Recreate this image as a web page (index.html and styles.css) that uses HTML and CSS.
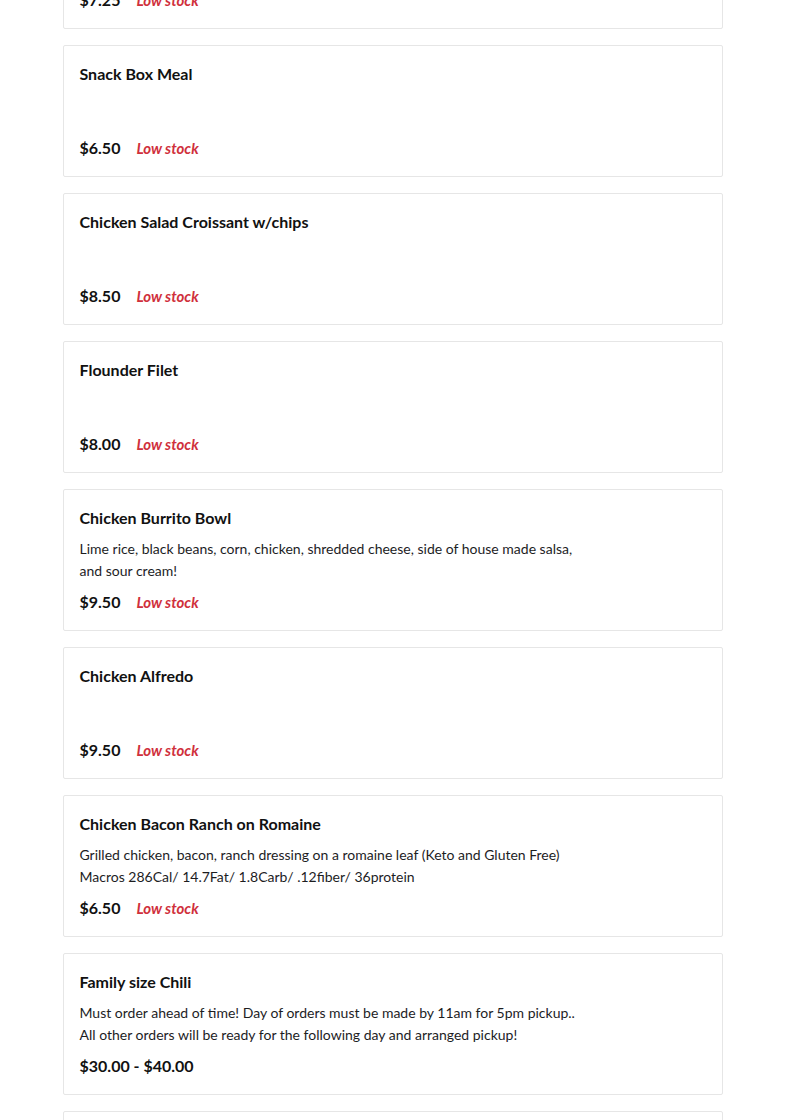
FILE: index.html
```html
<!DOCTYPE html>
<html lang="en">
<head>
    <meta charset="UTF-8">
    <meta name="viewport" content="width=device-width, initial-scale=1.0">
    <title>Menu</title>
    <link rel="stylesheet" href="styles.css">
</head>
<body>
    <div class="menu">
        <div class="item">
            <div class="info">
                <h3>Chicken Quesadilla</h3>
            </div>
            <div class="price-row"><span class="price">$7.25</span><span class="stock">Low stock</span></div>
        </div>

        <div class="item">
            <div class="info">
                <h3>Snack Box Meal</h3>
            </div>
            <div class="price-row"><span class="price">$6.50</span><span class="stock">Low stock</span></div>
        </div>

        <div class="item">
            <div class="info">
                <h3>Chicken Salad Croissant w/chips</h3>
            </div>
            <div class="price-row"><span class="price">$8.50</span><span class="stock">Low stock</span></div>
        </div>

        <div class="item">
            <div class="info">
                <h3>Flounder Filet</h3>
            </div>
            <div class="price-row"><span class="price">$8.00</span><span class="stock">Low stock</span></div>
        </div>

        <div class="item">
            <div class="info">
                <h3>Chicken Burrito Bowl</h3>
                <p class="desc">Lime rice, black beans, corn, chicken, shredded cheese, side of house made salsa, and sour cream!</p>
            </div>
            <div class="price-row"><span class="price">$9.50</span><span class="stock">Low stock</span></div>
        </div>

        <div class="item">
            <div class="info">
                <h3>Chicken Alfredo</h3>
            </div>
            <div class="price-row"><span class="price">$9.50</span><span class="stock">Low stock</span></div>
        </div>

        <div class="item">
            <div class="info">
                <h3>Chicken Bacon Ranch on Romaine</h3>
                <p class="desc">Grilled chicken, bacon, ranch dressing on a romaine leaf (Keto and Gluten Free)<br>Macros 286Cal/ 14.7Fat/ 1.8Carb/ .12fiber/ 36protein</p>
            </div>
            <div class="price-row"><span class="price">$6.50</span><span class="stock">Low stock</span></div>
        </div>

        <div class="item">
            <div class="info">
                <h3>Family size Chili</h3>
                <p class="desc">Must order ahead of time! Day of orders must be made by 11am for 5pm pickup..<br>All other orders will be ready for the following day and arranged pickup!</p>
            </div>
            <div class="price-row"><span class="price">$30.00 - $40.00</span></div>
        </div>

        <div class="item">
            <div class="info">
                <h3>Chili Dog Combo</h3>
            </div>
            <div class="price-row"><span class="price">$7.00</span><span class="stock">Low stock</span></div>
        </div>
    </div>
</body>
</html>
```

FILE: styles.css
```css
body {
    font-family: Lato, "Noto Sans", sans-serif;
    background-color: #fff;
    color: #1d1d1f;
    margin: 0;
}
.menu {
    max-width: 660px;
    margin: -103px auto 0;
    display: flex;
    flex-direction: column;
    gap: 16px;
}
.item {
    border: 1px solid #e6e6e6;
    border-radius: 2px;
    padding: 16px;
}
.info {
    min-height: 66px;
}
.item h3 {
    margin: 0;
    font-size: 16px;
    font-weight: 700;
    line-height: 24px;
    color: #111;
}
.desc {
    margin: 8px 0 0;
    max-width: 510px;
    font-size: 14px;
    line-height: 22px;
    color: #1d1d1f;
}
.price-row {
    margin-top: 8px;
    height: 24px;
    line-height: 24px;
    display: flex;
    align-items: center;
    gap: 16px;
}
.price {
    font-size: 16px;
    font-weight: 700;
    color: #111;
}
.stock {
    font-size: 15px;
    font-style: italic;
    font-weight: 700;
    color: #d0303c;
}
```
